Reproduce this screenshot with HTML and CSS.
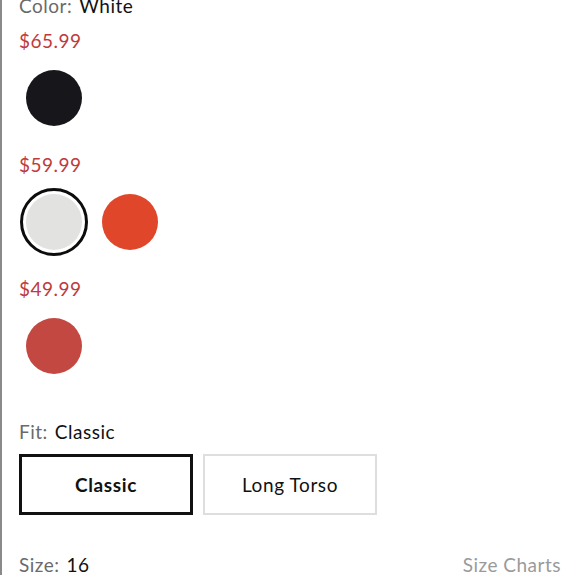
FILE: index.html
```html
<!DOCTYPE html>
<html>
<head>
<meta charset="utf-8">
<link rel="stylesheet" href="styles.css">
</head>
<body>
<div class="panel">
  <div class="label-row color-row"><span class="label">Color:</span><span class="value">White</span></div>

  <div class="group">
    <div class="price">$65.99</div>
    <div class="swatches">
      <div class="swatch"><span class="dot black"></span></div>
    </div>
  </div>

  <div class="group">
    <div class="price">$59.99</div>
    <div class="swatches">
      <div class="swatch selected"><span class="dot white"></span></div>
      <div class="swatch"><span class="dot orange"></span></div>
    </div>
  </div>

  <div class="group">
    <div class="price">$49.99</div>
    <div class="swatches">
      <div class="swatch"><span class="dot red"></span></div>
    </div>
  </div>

  <div class="label-row fit-row"><span class="label">Fit:</span><span class="value">Classic</span></div>

  <div class="fit-options">
    <div class="fit-btn active">Classic</div>
    <div class="fit-btn">Long Torso</div>
  </div>

  <div class="size-row">
    <div class="label-row"><span class="label">Size:</span><span class="value">16</span></div>
    <div class="size-charts">Size Charts</div>
  </div>
</div>
</body>
</html>
```

FILE: styles.css
```css
* { box-sizing: border-box; }
html, body { margin: 0; padding: 0; background: #fff; }
body {
  font-family: Lato, "Open Sans", sans-serif;
  font-size: 19px;
  line-height: 22px;
  color: #111;
  overflow: hidden;
  height: 580px;
}
.panel {
  border-left: 2px solid #8a8a8a;
  height: 580px;
  padding: 0 19px 0 17px;
}
.label-row { display: flex; align-items: baseline; gap: 7px; }
.label { color: #6a6a6a; letter-spacing: 0.5px; }
.value { color: #111; letter-spacing: 0.5px; }
.color-row { margin-top: -5px; }
.group { margin-top: 13px; }
.group + .group { margin-top: 22px; }
.price { color: #c03a3c; letter-spacing: 0.5px; }
.swatches { display: flex; gap: 8px; margin-top: 12px; margin-left: 1px; }
.swatch {
  width: 68px; height: 68px;
  border-radius: 50%;
  display: flex; align-items: center; justify-content: center;
}
.swatch.selected { border: 3px solid #0c0c0c; }
.dot { width: 56px; height: 56px; border-radius: 50%; display: block; }
.black { background: #17171b; }
.white { background: #e2e2e0; }
.orange { background: #e0462a; }
.red { background: #c34842; }
.fit-row { margin-top: 41px; }
.fit-options { display: flex; gap: 10px; margin-top: 11px; }
.fit-btn {
  width: 174px; height: 61px;
  border: 2px solid #dedede;
  display: flex; align-items: center; justify-content: center;
  letter-spacing: 0.6px;
}
.fit-btn.active { border: 3px solid #111; font-weight: 700; }
.size-row {
  display: flex; justify-content: space-between; align-items: baseline;
  margin-top: 39px;
}
.size-charts { color: #9a9a9a; letter-spacing: 0.5px; }
```
